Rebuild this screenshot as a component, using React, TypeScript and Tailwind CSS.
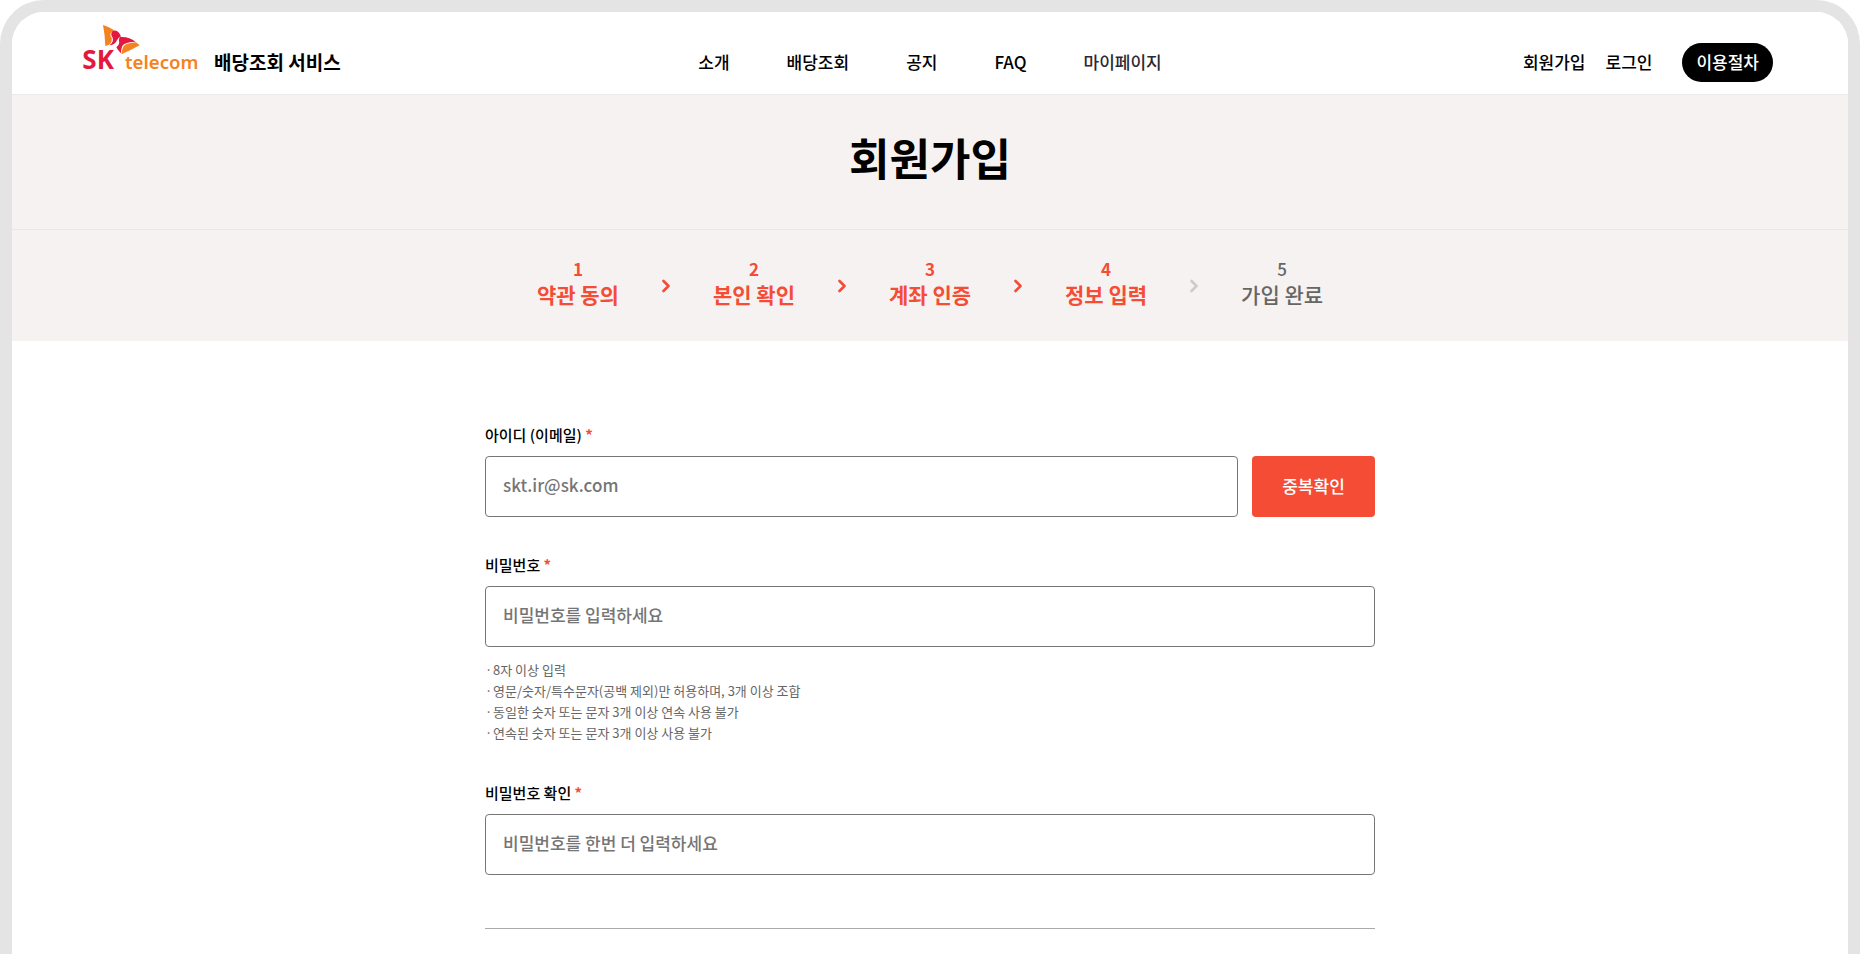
const NAV_ITEMS = ['소개', '배당조회', '공지', 'FAQ', '마이페이지'];

const STEPS = ['약관 동의', '본인 확인', '계좌 인증', '정보 입력', '가입 완료'];
const CURRENT_STEP = 4;

const PASSWORD_RULES = [
    '8자 이상 입력',
    '영문/숫자/특수문자(공백 제외)만 허용하며, 3개 이상 조합',
    '동일한 숫자 또는 문자 3개 이상 연속 사용 불가',
    '연속된 숫자 또는 문자 3개 이상 사용 불가',
];

const inputClass =
    'h-[61px] w-full min-w-0 rounded border border-[#767676] bg-white px-[17px] pb-1 text-[17px] font-medium text-black placeholder:text-[#757575]';

function Logo() {
    return (
        <svg width="116" height="46" viewBox="0 0 348 138" role="img" aria-label="SK telecom" className="shrink-0 overflow-visible">
            <path d="M60 0 Q80 6 94 16 Q82 19 82 31 Q90 43 84 53 Q79 61 67 63 Q66 30 60 0Z" fill="#f58220" />
            <path d="M86 20 Q97 11 108 23 L114 34 Q106 38 101 47 Q95 60 79 61 Q93 51 89 38 Q82 29 86 20Z" fill="#e4173e" />
            <path d="M111 36 Q138 34 158 50 Q129 51 120 60 Q114 68 114 85 Q105 77 100 67 Q111 58 108 48 Q107 41 111 36Z" fill="#e4173e" />
            <path d="M159 52 L170 61 Q143 76 115 88 Q117 70 123 62 Q132 54 159 52Z" fill="#f58220" />
            <text x="-2" y="133" fill="#e4173e" fontFamily="'Noto Sans', sans-serif" fontWeight="700" fontSize="78">SK</text>
            <text x="126" y="133" fill="#f58220" fontFamily="'Noto Sans', sans-serif" fontWeight="600" fontSize="56">telecom</text>
        </svg>
    );
}

function Header() {
    return (
        <header className="grid grid-cols-[1fr_auto_1fr] items-end border-b border-[#ebebeb] bg-white pt-[13px] pr-[75px] pb-3 pl-[71px] text-[17px] leading-[37px] font-medium">
            <a href="#" className="flex h-[57px] items-start gap-[15px]">
                <Logo />
                <span className="self-end pb-[2px] text-[19px] font-bold">배당조회 서비스</span>
            </a>
            <nav className="flex gap-[57px] pb-[2px] pl-1">
                {NAV_ITEMS.map((item) => (
                    <a key={item} href="#" className={item === '마이페이지' ? 'text-[#2b2833]' : ''}>
                        {item}
                    </a>
                ))}
            </nav>
            <div className="flex justify-end">
                <a href="#" className="mr-5">회원가입</a>
                <a href="#" className="mr-[30px]">로그인</a>
                <button type="button" className="rounded-full bg-black px-[14px] pb-[2px] text-white">이용절차</button>
            </div>
        </header>
    );
}

function StepList() {
    return (
        <ol className="flex justify-center gap-[43px] pt-[26px] pb-[35px]">
            {STEPS.map((label, idx) => {
                const step = idx + 1;
                const active = step <= CURRENT_STEP;
                return (
                    <li key={label} className="flex items-center gap-[43px]">
                        {idx > 0 && (
                            <svg width="8" height="14" viewBox="0 0 8 14" fill="none" className={active ? 'mt-[10px] text-[#f54c35]' : 'mt-[10px] text-[#cccccc]'}>
                                <path d="M1.5 2 L6.5 7 L1.5 12" stroke="currentColor" strokeWidth="2.6" strokeLinecap="round" strokeLinejoin="round" />
                            </svg>
                        )}
                        <div className={active ? 'text-center font-bold text-[#f54c35]' : 'text-center font-medium text-[#666666]'}>
                            <p className="text-[17px] leading-[26px]">{step}</p>
                            <p className="text-[21px] leading-6">{label}</p>
                        </div>
                    </li>
                );
            })}
        </ol>
    );
}

function FieldLabel({ htmlFor, children }: { htmlFor: string; children: string }) {
    return (
        <label htmlFor={htmlFor} className="mb-[9px] block text-[15px] leading-6 font-medium">
            {children} <span className="font-bold text-[#f54c35]">*</span>
        </label>
    );
}

export default function App() {
    return (
        <div className="min-h-screen bg-white font-['Noto_Sans_CJK_KR',sans-serif] text-black">
            <div className="min-h-screen overflow-hidden rounded-t-[44px] border-x-12 border-t-12 border-[#e4e4e4]">
                <Header />

                <section className="bg-[#f6f2f1]">
                    <h1 className="border-b border-[#e9e7e7] pt-[30px] pb-10 text-center text-[44px] leading-16 font-bold">회원가입</h1>
                    <StepList />
                </section>

                <form className="mx-auto max-w-[890px] pt-[82px]">
                    <div className="mb-9">
                        <FieldLabel htmlFor="email">아이디 (이메일)</FieldLabel>
                        <div className="flex gap-[14px]">
                            <input id="email" type="email" placeholder="skt.ir@sk.com" className={inputClass} />
                            <button type="button" className="w-[123px] shrink-0 rounded bg-[#f54c35] pb-[2px] text-[17px] font-medium text-white">
                                중복확인
                            </button>
                        </div>
                    </div>

                    <div className="mb-[38px]">
                        <FieldLabel htmlFor="password">비밀번호</FieldLabel>
                        <input id="password" type="password" placeholder="비밀번호를 입력하세요" className={inputClass} />
                        <ul className="mt-3 text-[13px] leading-[21px] text-[#666666]">
                            {PASSWORD_RULES.map((rule) => (
                                <li key={rule} className="flex">
                                    <span className="w-2 shrink-0">·</span>
                                    {rule}
                                </li>
                            ))}
                        </ul>
                    </div>

                    <FieldLabel htmlFor="password-confirm">비밀번호 확인</FieldLabel>
                    <input id="password-confirm" type="password" placeholder="비밀번호를 한번 더 입력하세요" className={inputClass} />

                    <hr className="mt-[53px] border-[#aaaaaa]" />
                </form>
            </div>
        </div>
    );
}
